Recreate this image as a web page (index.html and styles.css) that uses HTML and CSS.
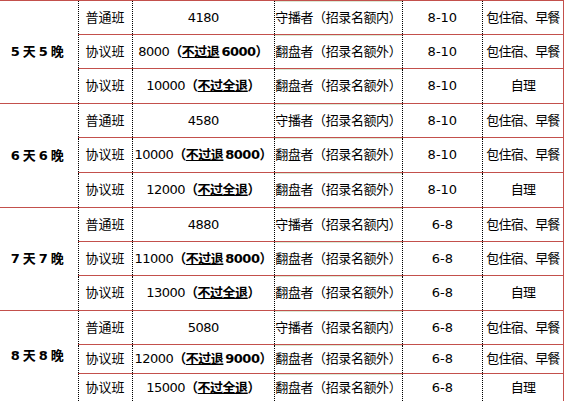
FILE: index.html
```html
<!DOCTYPE html>
<html lang="zh-CN">
<head>
<meta charset="utf-8">
<title>价格表</title>
<link rel="stylesheet" href="styles.css">
</head>
<body>
<table class="price-table">
  <colgroup>
    <col class="c-days"><col class="c-type"><col class="c-price"><col class="c-role"><col class="c-num"><col class="c-stay">
  </colgroup>
  <tbody>
    <tr class="row">
      <td class="days" rowspan="3">5天5晚</td>
      <td>普通班</td><td class="price">4180</td><td class="role">守播者（招录名额内）</td><td>8-10</td><td class="stay">包住宿、早餐</td>
    </tr>
    <tr class="row">
      <td>协议班</td><td class="price">8000<b>（<u>不过退</u><span class="gap">6000</span>）</b></td><td class="role">翻盘者（招录名额外）</td><td>8-10</td><td class="stay">包住宿、早餐</td>
    </tr>
    <tr class="row row-tall">
      <td>协议班</td><td class="price">10000<b>（<u>不过全退</u>）</b></td><td class="role">翻盘者（招录名额外）</td><td>8-10</td><td class="stay">自理</td>
    </tr>

    <tr class="row">
      <td class="days" rowspan="3">6天6晚</td>
      <td>普通班</td><td class="price">4580</td><td class="role">守播者（招录名额内）</td><td>8-10</td><td class="stay">包住宿、早餐</td>
    </tr>
    <tr class="row row-tall">
      <td>协议班</td><td class="price">10000<b>（<u>不过退</u><span class="gap">8000</span>）</b></td><td class="role">翻盘者（招录名额外）</td><td>8-10</td><td class="stay">包住宿、早餐</td>
    </tr>
    <tr class="row row-tall">
      <td>协议班</td><td class="price">12000<b>（<u>不过全退</u>）</b></td><td class="role">翻盘者（招录名额外）</td><td>8-10</td><td class="stay">自理</td>
    </tr>

    <tr class="row">
      <td class="days" rowspan="3">7天7晚</td>
      <td>普通班</td><td class="price">4880</td><td class="role">守播者（招录名额内）</td><td>6-8</td><td class="stay">包住宿、早餐</td>
    </tr>
    <tr class="row">
      <td>协议班</td><td class="price">11000<b>（<u>不过退</u><span class="gap">8000</span>）</b></td><td class="role">翻盘者（招录名额外）</td><td>6-8</td><td class="stay">包住宿、早餐</td>
    </tr>
    <tr class="row row-tall">
      <td>协议班</td><td class="price">13000<b>（<u>不过全退</u>）</b></td><td class="role">翻盘者（招录名额外）</td><td>6-8</td><td class="stay">自理</td>
    </tr>

    <tr class="row">
      <td class="days" rowspan="3">8天8晚</td>
      <td>普通班</td><td class="price">5080</td><td class="role">守播者（招录名额内）</td><td>6-8</td><td class="stay">包住宿、早餐</td>
    </tr>
    <tr class="row row-short">
      <td>协议班</td><td class="price">12000<b>（<u>不过退</u><span class="gap">9000</span>）</b></td><td class="role">翻盘者（招录名额外）</td><td>6-8</td><td class="stay">包住宿、早餐</td>
    </tr>
    <tr class="row row-last">
      <td>协议班</td><td class="price">15000<b>（<u>不过全退</u>）</b></td><td class="role">翻盘者（招录名额外）</td><td>6-8</td><td class="stay">自理</td>
    </tr>
  </tbody>
</table>
</body>
</html>
```

FILE: styles.css
```css
html, body {
  margin: 0;
  padding: 0;
  background: #ffffff;
}

.price-table {
  border-collapse: collapse;
  table-layout: fixed;
  width: 564px;
  font-family: "DejaVu Sans", "Noto Sans CJK SC", sans-serif;
  font-size: 13px;
  color: #000000;
  border-top: 1px solid #c3504c;
  border-right: 1px solid #c3504c;
  border-bottom: 1px solid #c3504c;
}

.c-days { width: 78px; }
.c-type { width: 54px; }
.c-price { width: 142px; }
.c-role { width: 128px; }
.c-num { width: 80px; }
.c-stay { width: 81px; }

.price-table td {
  padding: 0;
  text-align: center;
  vertical-align: middle;
  white-space: nowrap;
  overflow: visible;
  border-top: 1px solid #c3504c;
  border-left: 1px dotted #000000;
  line-height: 16px;
}

.price-table td.days {
  border-left: none;
  font-weight: bold;
  letter-spacing: 3px;
}

.price-table td.price {
  letter-spacing: -0.5px;
}

.price-table td.role {
  letter-spacing: -0.4px;
  box-shadow: inset 0 1px 0 #dbe8d4;
}

.price-table td.stay {
  letter-spacing: -0.8px;
}

.price-table b {
  font-weight: bold;
}

.price-table .gap {
  margin-left: 2px;
}

.price-table u {
  text-decoration: underline;
  text-underline-offset: 1px;
}

.row { height: 34px; }
.row-tall { height: 35px; }
.row-short { height: 29px; }
.row-last { height: 28px; }
```
